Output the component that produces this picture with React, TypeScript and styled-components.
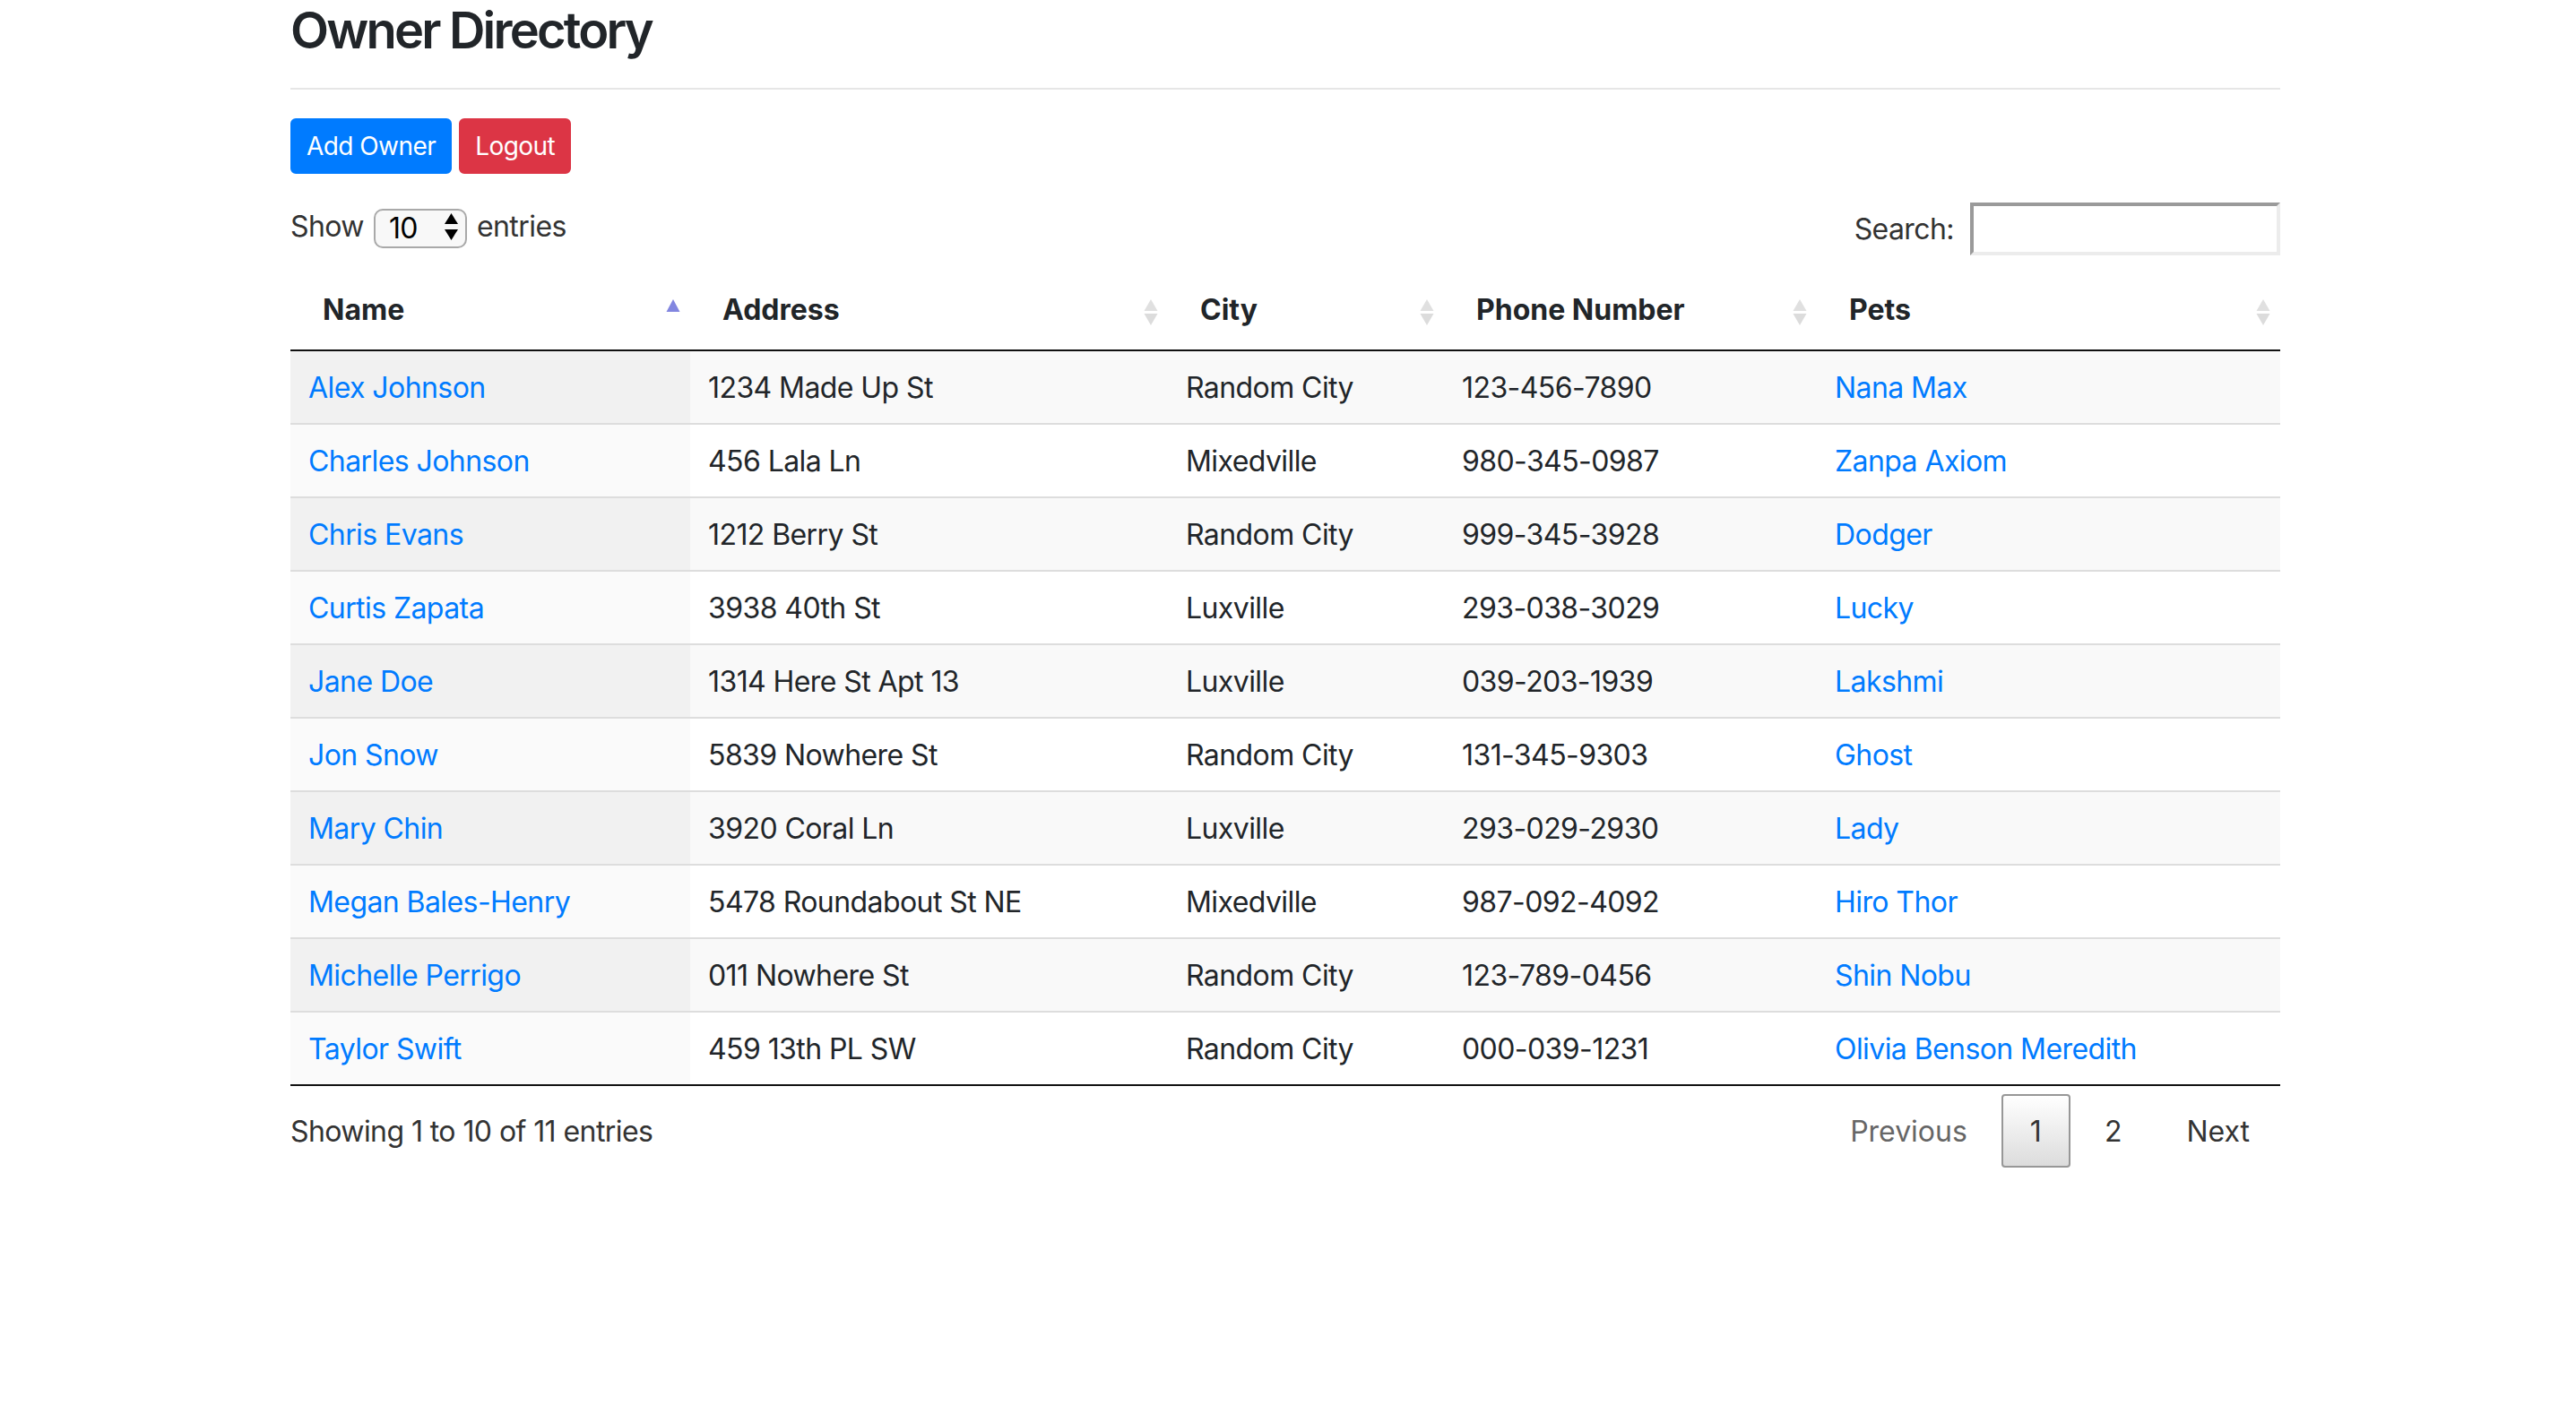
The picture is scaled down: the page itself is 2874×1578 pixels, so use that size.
import React from "react";
import styled, { createGlobalStyle } from "styled-components";

const GlobalStyle = createGlobalStyle`
  html, body { margin: 0; padding: 0; background: #ffffff; }
  body {
    font-family: Inter, "Noto Sans", "Liberation Sans", sans-serif;
    font-size: 32px;
    line-height: 48px;
    color: #212529;
    letter-spacing: -0.018em;
  }
  * { box-sizing: border-box; }
`;

const Page = styled.div`
  width: 2220px;
  margin-left: 324px;
`;

const Title = styled.h3`
  margin: 0;
  padding-top: 1px;
  font-size: 56px;
  line-height: 67px;
  font-weight: 600;
  letter-spacing: -0.05em;
  color: #212529;
`;

const Divider = styled.hr`
  margin: 30px 0 32px;
  border: 0;
  border-top: 2px solid #e6e6e6;
`;

const ButtonRow = styled.div`
  display: flex;
  gap: 8px;
`;

const Button = styled.button<{ $variant: "primary" | "danger" }>`
  font-family: inherit;
  font-size: 28px;
  line-height: 42px;
  letter-spacing: -0.02em;
  padding: 8px 16px;
  border-radius: 6px;
  border: 2px solid ${(p) => (p.$variant === "primary" ? "#007bff" : "#dc3545")};
  background: ${(p) => (p.$variant === "primary" ? "#007bff" : "#dc3545")};
  color: #ffffff;
  font-weight: 400;
`;

const Controls = styled.div`
  display: flex;
  justify-content: space-between;
  align-items: flex-start;
  margin-top: 32px;
  color: #333333;
`;

const LengthLabel = styled.label`
  display: flex;
  align-items: center;
  gap: 11px;
  margin-top: 3px;
`;

const SelectWrap = styled.span`
  position: relative;
  display: inline-block;
  width: 104px;
  height: 44px;
`;

const Select = styled.select`
  appearance: none;
  width: 104px;
  height: 44px;
  border: 2px solid #a9a9a9;
  border-radius: 10px;
  background: #f8f8f8;
  font-family: inherit;
  font-size: 32px;
  letter-spacing: -0.02em;
  color: #000;
  padding: 0 0 0 15px;
`;

const SelectArrows = styled.svg`
  position: absolute;
  right: 9px;
  top: 7px;
  pointer-events: none;
`;

const SearchLabel = styled.label`
  display: flex;
  align-items: center;
  gap: 18px;
`;

const SearchInput = styled.input`
  width: 346px;
  height: 59px;
  border-style: solid;
  border-width: 4px;
  border-color: #9a9a9a #ececec #ececec #9a9a9a;
  background: #fff;
  font-family: inherit;
  font-size: 32px;
  padding: 2px 4px;
`;

const Table = styled.table`
  width: 2220px;
  table-layout: fixed;
  border-collapse: separate;
  border-spacing: 0;
  margin-top: 17px;
  border-bottom: 2px solid #111111;
`;

const HeadCell = styled.th`
  position: relative;
  text-align: left;
  font-weight: 700;
  letter-spacing: 0;
  padding: 20px 36px 20px 36px;
  border-bottom: 2px solid #111111;
  color: #212529;
`;

const SortIcon = styled.svg`
  position: absolute;
  right: 11px;
  top: 30px;
`;

const Row = styled.tr<{ $odd: boolean }>`
  background: ${(p) => (p.$odd ? "#f9f9f9" : "#ffffff")};
  &:not(:first-child) td { border-top: 2px solid #dddddd; }
`;

const Cell = styled.td<{ $sorted?: boolean; $odd?: boolean }>`
  padding: 17px 20px 15px;
  white-space: nowrap;
  overflow: hidden;
  background: ${(p) => (p.$sorted ? (p.$odd ? "#f1f1f1" : "#fafafa") : "transparent")};
`;

const Link = styled.a`
  color: #007bff;
  text-decoration: none;
`;

const Footer = styled.div`
  display: flex;
  justify-content: space-between;
  align-items: center;
  padding-top: 9px;
  color: #333333;
`;

const Info = styled.div`
  padding-top: 2px;
`;

const Pager = styled.div`
  display: flex;
`;

const PageButton = styled.a<{ $current?: boolean; $disabled?: boolean }>`
  display: inline-block;
  padding: 17px 32px 15px;
  line-height: 46px;
  margin-left: 4px;
  border-radius: 4px;
  letter-spacing: 0;
  border: 2px solid ${(p) => (p.$current ? "#979797" : "transparent")};
  background: ${(p) => (p.$current ? "linear-gradient(to bottom, #ffffff 0%, #dcdcdc 100%)" : "transparent")};
  color: ${(p) => (p.$disabled ? "#666666" : "#333333")};
  ${(p) => (p.$current ? "padding-left: 30px; padding-right: 30px;" : "")}
`;

type Owner = { name: string; address: string; city: string; phone: string; pets: string };

const owners: Owner[] = [
  { name: "Alex Johnson", address: "1234 Made Up St", city: "Random City", phone: "123-456-7890", pets: "Nana Max" },
  { name: "Charles Johnson", address: "456 Lala Ln", city: "Mixedville", phone: "980-345-0987", pets: "Zanpa Axiom" },
  { name: "Chris Evans", address: "1212 Berry St", city: "Random City", phone: "999-345-3928", pets: "Dodger" },
  { name: "Curtis Zapata", address: "3938 40th St", city: "Luxville", phone: "293-038-3029", pets: "Lucky" },
  { name: "Jane Doe", address: "1314 Here St Apt 13", city: "Luxville", phone: "039-203-1939", pets: "Lakshmi" },
  { name: "Jon Snow", address: "5839 Nowhere St", city: "Random City", phone: "131-345-9303", pets: "Ghost" },
  { name: "Mary Chin", address: "3920 Coral Ln", city: "Luxville", phone: "293-029-2930", pets: "Lady" },
  { name: "Megan Bales-Henry", address: "5478 Roundabout St NE", city: "Mixedville", phone: "987-092-4092", pets: "Hiro Thor" },
  { name: "Michelle Perrigo", address: "011 Nowhere St", city: "Random City", phone: "123-789-0456", pets: "Shin Nobu" },
  { name: "Taylor Swift", address: "459 13th PL SW", city: "Random City", phone: "000-039-1231", pets: "Olivia Benson Meredith" },
];

const columns = [
  { label: "Name", width: 446, sort: "asc" as const },
  { label: "Address", width: 533, sort: "both" as const },
  { label: "City", width: 308, sort: "both" as const },
  { label: "Phone Number", width: 416, sort: "both" as const },
  { label: "Pets", width: 517, sort: "both" as const },
];

function Sort({ kind }: { kind: "asc" | "both" }) {
  return (
    <SortIcon width="16" height="32" viewBox="0 0 16 32">
      {kind === "asc" ? (
        <polygon points="8,2 15.5,16 0.5,16" fill="#8286e0" />
      ) : (
        <>
          <polygon points="8,2 15.5,15 0.5,15" fill="#e0e0e0" />
          <polygon points="0.5,18 15.5,18 8,31" fill="#dcdcdc" />
        </>
      )}
    </SortIcon>
  );
}

export default function App() {
  return (
    <>
      <GlobalStyle />
      <Page>
        <Title>Owner Directory</Title>
        <Divider />
        <ButtonRow>
          <Button $variant="primary">Add Owner</Button>
          <Button $variant="danger">Logout</Button>
        </ButtonRow>
        <Controls>
          <LengthLabel>
            Show
            <SelectWrap>
              <Select defaultValue="10">
                <option value="10">10</option>
                <option value="25">25</option>
                <option value="50">50</option>
                <option value="100">100</option>
              </Select>
              <SelectArrows width="17" height="31" viewBox="0 0 17 31">
                <polygon points="8.5,0 16,12 1,12" fill="#000" />
                <polygon points="1,18 16,18 8.5,30" fill="#000" />
              </SelectArrows>
            </SelectWrap>
            entries
          </LengthLabel>
          <SearchLabel>
            Search:
            <SearchInput type="search" />
          </SearchLabel>
        </Controls>
        <Table>
          <colgroup>
            {columns.map((c) => (
              <col key={c.label} style={{ width: c.width }} />
            ))}
          </colgroup>
          <thead>
            <tr>
              {columns.map((c) => (
                <HeadCell key={c.label}>
                  {c.label}
                  <Sort kind={c.sort} />
                </HeadCell>
              ))}
            </tr>
          </thead>
          <tbody>
            {owners.map((o, i) => {
              const odd = i % 2 === 0;
              return (
                <Row key={o.name} $odd={odd}>
                  <Cell $sorted $odd={odd}>
                    <Link href="#">{o.name}</Link>
                  </Cell>
                  <Cell>{o.address}</Cell>
                  <Cell>{o.city}</Cell>
                  <Cell>{o.phone}</Cell>
                  <Cell>
                    <Link href="#">{o.pets}</Link>
                  </Cell>
                </Row>
              );
            })}
          </tbody>
        </Table>
        <Footer>
          <Info>Showing 1 to 10 of 11 entries</Info>
          <Pager>
            <PageButton $disabled>Previous</PageButton>
            <PageButton $current>1</PageButton>
            <PageButton>2</PageButton>
            <PageButton>Next</PageButton>
          </Pager>
        </Footer>
      </Page>
    </>
  );
}
